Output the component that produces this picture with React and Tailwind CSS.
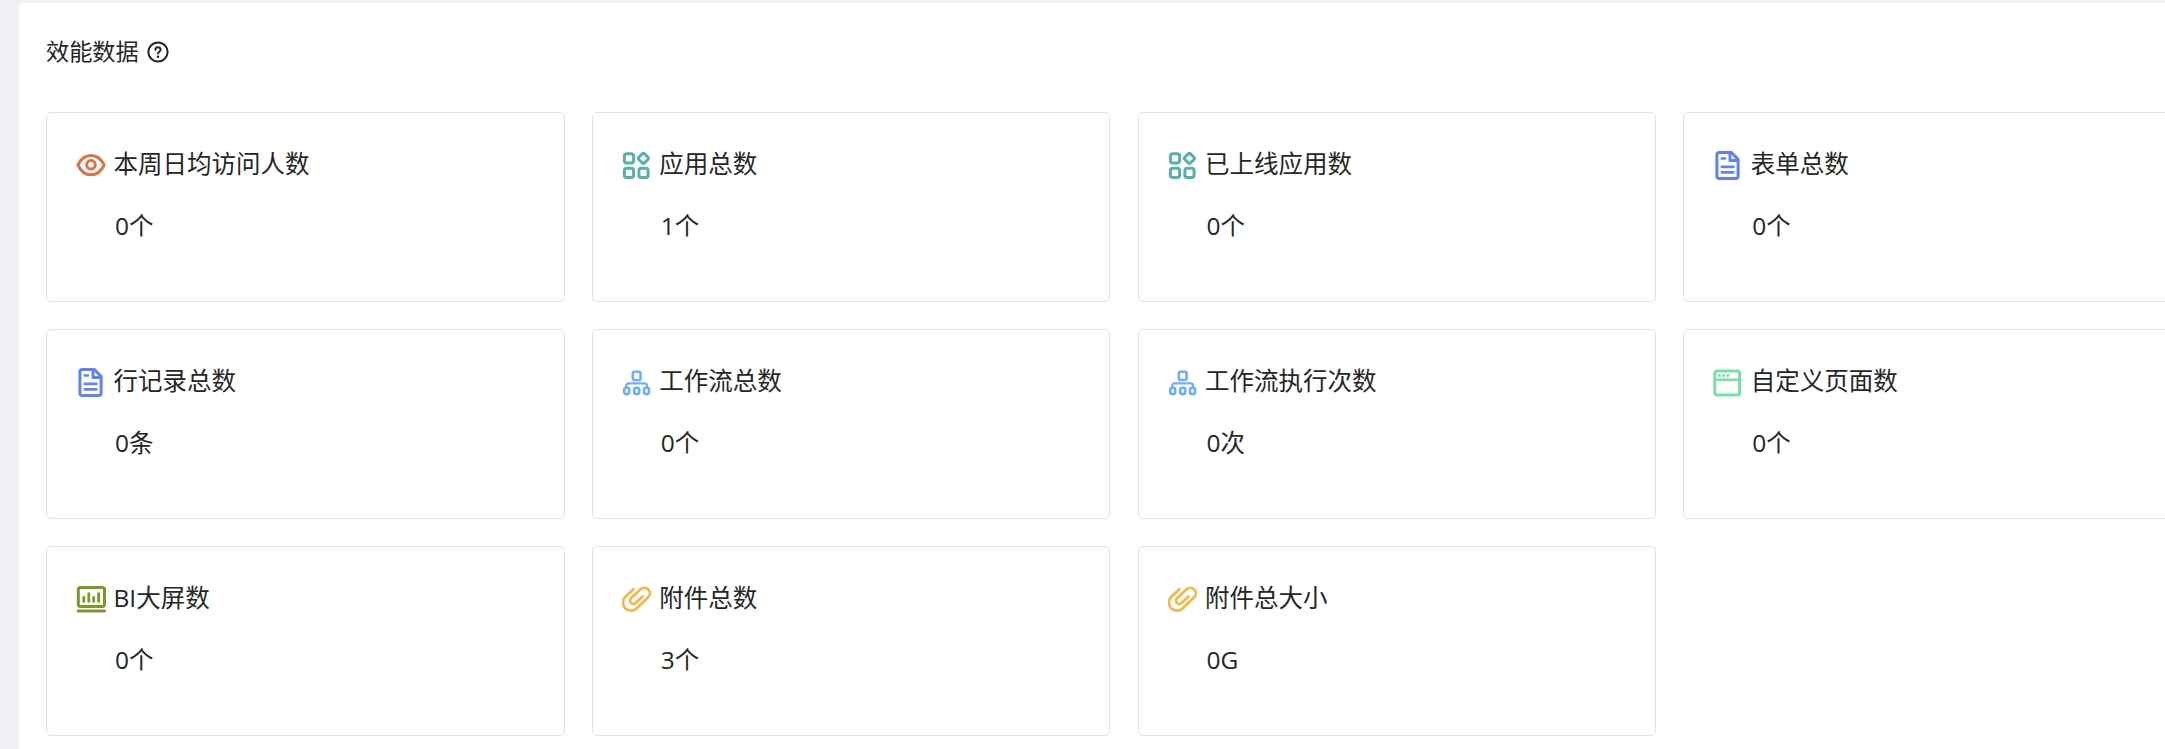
const iconProps = {
  viewBox: '0 0 30 30',
  fill: 'none',
  stroke: 'currentColor',
  strokeWidth: 3,
  strokeLinecap: 'round',
  strokeLinejoin: 'round',
}

const EyeIcon = () => (
  <svg {...iconProps} className="w-[30px] h-[30px] shrink-0 text-[#e07048]">
    <path d="M1.9 15C4.6 9.2 9.4 5.4 15 5.4S25.4 9.2 28.1 15C25.4 20.8 20.6 24.8 15 24.8S4.6 20.8 1.9 15Z" />
    <circle cx="15" cy="14.8" r="4.3" />
  </svg>
)

const AppsIcon = () => (
  <svg {...iconProps} className="w-[30px] h-[30px] shrink-0 text-[#56b2a9]">
    <rect x="2.4" y="3.8" width="9.2" height="9.2" rx="2.4" />
    <rect x="2.4" y="18.3" width="9.2" height="9.2" rx="2.4" />
    <rect x="16.9" y="18.3" width="9.2" height="9.2" rx="2.4" />
    <rect x="17.4" y="4.4" width="8" height="8" rx="1.6" transform="rotate(45 21.4 8.4)" />
  </svg>
)

const FileIcon = () => (
  <svg {...iconProps} className="w-[30px] h-[30px] shrink-0 text-[#6182f7]">
    <path d="M6.2 2.4H18.2L25.1 9.4V26.2A2.3 2.3 0 0 1 22.8 28.5H6.2A2.3 2.3 0 0 1 3.9 26.2V4.7A2.3 2.3 0 0 1 6.2 2.4Z" />
    <path d="M17 3V10.4H24.6" />
    <path d="M8.8 8.5H12M8.8 16.8H20.4M8.8 22.3H20.4" strokeWidth="2.7" />
  </svg>
)

const FlowIcon = () => (
  <svg {...iconProps} strokeWidth={2.6} className="w-[30px] h-[30px] shrink-0 text-[#6eaefa]">
    <rect x="10.8" y="4.8" width="7.8" height="8.2" rx="1.8" />
    <path d="M4.4 19.6V18.4A2 2 0 0 1 6.4 16.4H22.9A2 2 0 0 1 24.9 18.4V19.6" strokeWidth="2.3" />
    <rect x="2.2" y="20.7" width="5" height="6.4" rx="2" />
    <rect x="12.2" y="20.7" width="5" height="6.4" rx="2" />
    <rect x="22" y="20.7" width="5" height="6.4" rx="2" />
  </svg>
)

const WindowIcon = () => (
  <svg {...iconProps} className="w-[30px] h-[30px] shrink-0 text-[#73e0ac]">
    <rect x="1.8" y="4.1" width="24.8" height="24" rx="2.6" />
    <path d="M2 12.7H26.4" strokeWidth="2.6" />
    <path d="M6.3 8.4H6.31M10.6 8.4H10.61M14.9 8.4H14.91" />
  </svg>
)

const ScreenIcon = () => (
  <svg {...iconProps} className="w-[30px] h-[30px] shrink-0 text-[#779a2b]">
    <rect x="2.3" y="3.6" width="26.2" height="18.8" rx="2.2" />
    <path d="M7.8 13.5V17.4M12.8 9.6V17.4M17.7 13.5V17.4M22.6 9.6V17.4" strokeWidth="2.8" />
    <path d="M2.2 26.9H28.6" />
  </svg>
)

const ClipIcon = () => (
  <svg {...iconProps} strokeWidth={2.8} className="w-[30px] h-[30px] shrink-0 text-[#f5b84d]">
    <path d="M11.4 5.2L3.4 12.8A8 8 0 0 0 14.6 24.4L26.1 13.3A5.5 5.5 0 0 0 18.5 5.3L9.1 14.3A3.3 3.3 0 0 0 13.7 19.1L20.4 12.6" />
  </svg>
)

const stats = [
  { label: '本周日均访问人数', value: '0个', Icon: EyeIcon },
  { label: '应用总数', value: '1个', Icon: AppsIcon },
  { label: '已上线应用数', value: '0个', Icon: AppsIcon },
  { label: '表单总数', value: '0个', Icon: FileIcon },
  { label: '行记录总数', value: '0条', Icon: FileIcon },
  { label: '工作流总数', value: '0个', Icon: FlowIcon },
  { label: '工作流执行次数', value: '0次', Icon: FlowIcon },
  { label: '自定义页面数', value: '0个', Icon: WindowIcon },
  { label: 'BI大屏数', value: '0个', Icon: ScreenIcon },
  { label: '附件总数', value: '3个', Icon: ClipIcon },
  { label: '附件总大小', value: '0G', Icon: ClipIcon },
]

function StatCard({ label, value, Icon }) {
  return (
    <div className="h-[190px] rounded-[5px] border border-[#e3e3e4] pl-[29px] pt-[32px]">
      <div className="flex items-center gap-[7.5px] h-10">
        <Icon />
        <span className="-mt-0.5">{label}</span>
      </div>
      <div className="mt-[21px] h-10 pl-[39px] leading-10">{value}</div>
    </div>
  )
}

export default function App() {
  return (
    <div className="h-[749px] overflow-hidden bg-[#eff1f4] pl-[19px] pt-[3px] text-[#262626] font-['Open_Sans','Noto_Sans_CJK_SC',sans-serif]">
      <div className="h-full rounded-tl-[5px] bg-white pl-[27px] pt-[29px]">
        <div className="flex h-10 items-center gap-2 text-[23.2px]">
          <h2 className="-mt-0.5">效能数据</h2>
          <svg viewBox="0 0 22 22" fill="none" stroke="currentColor" strokeLinecap="round" className="h-[22px] w-[22px]">
            <circle cx="11" cy="11" r="9.6" strokeWidth="2" />
            <path d="M8.4 8.8C8.4 7.3 9.5 6.3 11 6.3S13.6 7.3 13.6 8.8C13.6 10.6 11 10.8 11 12.6" strokeWidth="2" />
            <circle cx="11" cy="15.7" r="1.3" fill="currentColor" stroke="none" />
          </svg>
        </div>
        <div className="mt-10 grid grid-cols-[repeat(4,518.7px)] gap-x-[27.1px] gap-y-[27.2px] text-[24.5px]">
          {stats.map((s) => (
            <StatCard key={s.label} {...s} />
          ))}
        </div>
      </div>
    </div>
  )
}
